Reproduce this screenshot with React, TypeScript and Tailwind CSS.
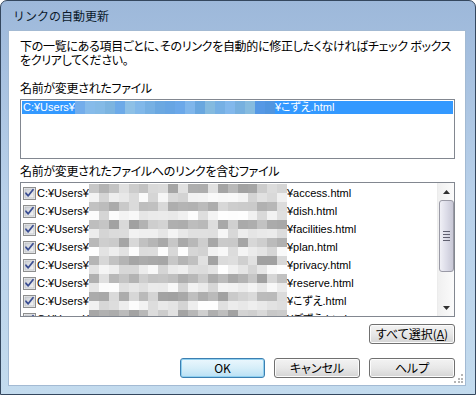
import React from "react";

function makeRand(seed: number) {
  let s = seed;
  return () => {
    s = (s * 1103515245 + 12345) % 2147483648;
    return s / 2147483648;
  };
}

const FONT = { fontFamily: '"Noto Sans CJK JP", "Liberation Sans", sans-serif' };
const LATIN = { fontFamily: '"Liberation Sans", "Noto Sans CJK JP", sans-serif' };

function grayRow(rand: () => number, n: number, lo: number, hi: number) {
  const out: string[] = [];
  for (let i = 0; i < n; i++) {
    const v = Math.round(lo + rand() * (hi - lo));
    out.push(`rgb(${v},${v},${v})`);
  }
  return out;
}

function Blur({ seed }: { seed: number }) {
  const rand = makeRand(seed);
  const top = grayRow(rand, 20, 160, 225);
  const bottom = grayRow(rand, 20, 210, 255);
  return (
    <div className="flex flex-col w-[198px] h-[18px] flex-none">
      <div className="flex h-[9px]">
        {top.map((c, i) => (
          <div key={i} className="h-full flex-1" style={{ backgroundColor: c }} />
        ))}
      </div>
      <div className="flex h-[9px]">
        {bottom.map((c, i) => (
          <div key={i} className="h-full flex-1" style={{ backgroundColor: c }} />
        ))}
      </div>
    </div>
  );
}

function BlueBlur() {
  const rand = makeRand(77);
  const cells: string[] = [];
  for (let i = 0; i < 20; i++) {
    const t = rand();
    const r = Math.round(75 + t * 70);
    const g = Math.round(145 + t * 50);
    const b = Math.round(222 + rand() * 18);
    cells.push(`rgb(${r},${g},${b})`);
  }
  return (
    <div className="flex w-[200px] h-full flex-none">
      {cells.map((c, i) => (
        <div key={i} className="h-full flex-1" style={{ backgroundColor: c }} />
      ))}
    </div>
  );
}

function Checkbox() {
  return (
    <svg width="13" height="13" viewBox="0 0 13 13" className="flex-none block">
      <defs>
        <linearGradient id="cbg" x1="0" y1="0" x2="1" y2="1">
          <stop offset="0" stopColor="#cbcfd5" />
          <stop offset="1" stopColor="#f6f6f6" />
        </linearGradient>
      </defs>
      <rect x="0.5" y="0.5" width="12" height="12" fill="#f4f4f4" stroke="#8e8f8f" />
      <rect x="2" y="2" width="9" height="9" fill="url(#cbg)" stroke="#b9bdc4" strokeWidth="0.8" />
      <path d="M3 6.3 L5.2 8.8 L10 2.8" fill="none" stroke="#3c4f93" strokeWidth="1.8" strokeLinejoin="round" strokeLinecap="round" />
    </svg>
  );
}

function VButton({ children, def, className }: { children: React.ReactNode; def?: boolean; className?: string }) {
  return (
    <div
      className={
        "h-[20px] rounded-[3px] border flex items-center justify-center text-[12px] text-black flex-none " +
        (def
          ? "border-[#3c7fb1] bg-gradient-to-b from-[#ebf7fd] via-[#d6eef9] to-[#b9e0f4] shadow-[inset_0_0_0_1px_#8fd0f0] "
          : "border-[#707070] bg-gradient-to-b from-[#f3f3f3] via-[#e8e8e8] to-[#d4d4d4] shadow-[inset_0_0_0_1px_#fcfcfc] ") +
        (className ?? "")
      }
    >
      {children}
    </div>
  );
}

const files = [
  "¥access.html",
  "¥dish.html",
  "¥facilities.html",
  "¥plan.html",
  "¥privacy.html",
  "¥reserve.html",
  "¥こずえ.html",
  "¥ごずえ.html",
];

export default function App() {
  return (
    <div style={FONT} className="w-[476px] h-[395px] text-black">
      <div className="w-full h-full flex flex-col rounded-t-[7px] border border-[#34475e] bg-gradient-to-b from-[#9db8da] via-[#b9d1ea] to-[#c3dbee] overflow-hidden">
        {/* title bar */}
        <div className="h-[29px] flex-none flex items-center pl-[12px] text-[12px] text-[#0c1a2b]">
          リンクの自動更新
        </div>
        {/* body */}
        <div className="flex-1 flex pl-[7px] pr-[9px] pb-[8px] min-h-0 min-w-0">
          <div className="flex-1 min-w-0 overflow-hidden bg-white border border-[#a3bad3] flex flex-col pl-[11px] pr-[10px] pt-[8px] text-[12px] leading-[14px] relative [font-feature-settings:'palt']">
            <div className="whitespace-nowrap tracking-[-0.3px]">
              下の一覧にある項目ごとに、そのリンクを自動的に修正したくなければチェック ボックス
              <br />
              をクリアしてください。
            </div>
            <div className="mt-[14px] whitespace-nowrap tracking-[-0.3px]">名前が変更されたファイル</div>
            {/* list 1 */}
            <div className="mt-[4px] h-[60px] border border-[#828790] p-[1px]">
              <div style={LATIN} className="h-[13px] bg-[#3399ff] text-white text-[11px] flex items-center whitespace-nowrap overflow-hidden">
                <span className="w-[53px] pl-[1px] flex-none leading-[13px]">C:¥Users¥</span>
                <BlueBlur />
                <span className="leading-[13px]">¥こずえ.html</span>
              </div>
            </div>
            <div className="mt-[5px] whitespace-nowrap tracking-[-0.3px]">名前が変更されたファイルへのリンクを含むファイル</div>
            {/* list 2 */}
            <div className="mt-[4px] h-[135px] border border-[#828790] flex overflow-hidden">
              <div style={LATIN} className="flex-1 min-w-0 pt-[1px] overflow-hidden text-[11px]">
                {files.map((f, i) => (
                  <div key={i} className="h-[18px] flex items-center whitespace-nowrap">
                    <span className="ml-[2px] flex-none">
                      <Checkbox />
                    </span>
                    <span className="w-[53px] pl-[1px] flex-none">C:¥Users¥</span>
                    <Blur seed={i * 31 + 7} />
                    <span>{f}</span>
                  </div>
                ))}
              </div>
              {/* scrollbar */}
              <div className="w-[17px] flex-none bg-gradient-to-r from-[#f0f0f0] to-[#fbfbfb] border-l border-[#ececec] flex flex-col items-center">
                <div className="h-[17px] flex items-center justify-center">
                  <svg width="7" height="4" viewBox="0 0 7 4">
                    <path d="M0 4 L3.5 0 L7 4 Z" fill="#303030" />
                  </svg>
                </div>
                <div className="w-[15px] h-[72px] rounded-[3px] border border-[#9a9aa6] bg-gradient-to-r from-[#f0f0f6] via-[#dcdce8] to-[#c8c8d6] flex flex-col items-center justify-center gap-[2px]">
                  <div className="w-[7px] h-[1px] bg-[#606070]" />
                  <div className="w-[7px] h-[1px] bg-[#606070]" />
                  <div className="w-[7px] h-[1px] bg-[#606070]" />
                  <div className="w-[7px] h-[1px] bg-[#606070]" />
                </div>
                <div className="flex-1" />
                <div className="h-[17px] flex items-center justify-center">
                  <svg width="7" height="4" viewBox="0 0 7 4">
                    <path d="M0 0 L3.5 4 L7 0 Z" fill="#303030" />
                  </svg>
                </div>
              </div>
            </div>
            <div className="mt-[7px] flex justify-end">
              <VButton className="w-[86px]">
                すべて選択(<span className="underline">A</span>)
              </VButton>
            </div>
            <div className="mt-[14px] flex justify-end gap-[9px]">
              <VButton def className="w-[85px]">OK</VButton>
              <VButton className="w-[86px]">キャンセル</VButton>
              <VButton className="w-[86px]">ヘルプ</VButton>
            </div>
            {/* resize grip */}
            <div className="absolute right-[1px] bottom-[1px] w-[10px] h-[10px] grid grid-cols-3 gap-[1px]">
              <div />
              <div />
              <div className="w-[2px] h-[2px] bg-[#b5b5b5]" />
              <div />
              <div className="w-[2px] h-[2px] bg-[#b5b5b5]" />
              <div className="w-[2px] h-[2px] bg-[#b5b5b5]" />
              <div className="w-[2px] h-[2px] bg-[#b5b5b5]" />
              <div className="w-[2px] h-[2px] bg-[#b5b5b5]" />
              <div className="w-[2px] h-[2px] bg-[#b5b5b5]" />
            </div>
          </div>
        </div>
      </div>
    </div>
  );
}
